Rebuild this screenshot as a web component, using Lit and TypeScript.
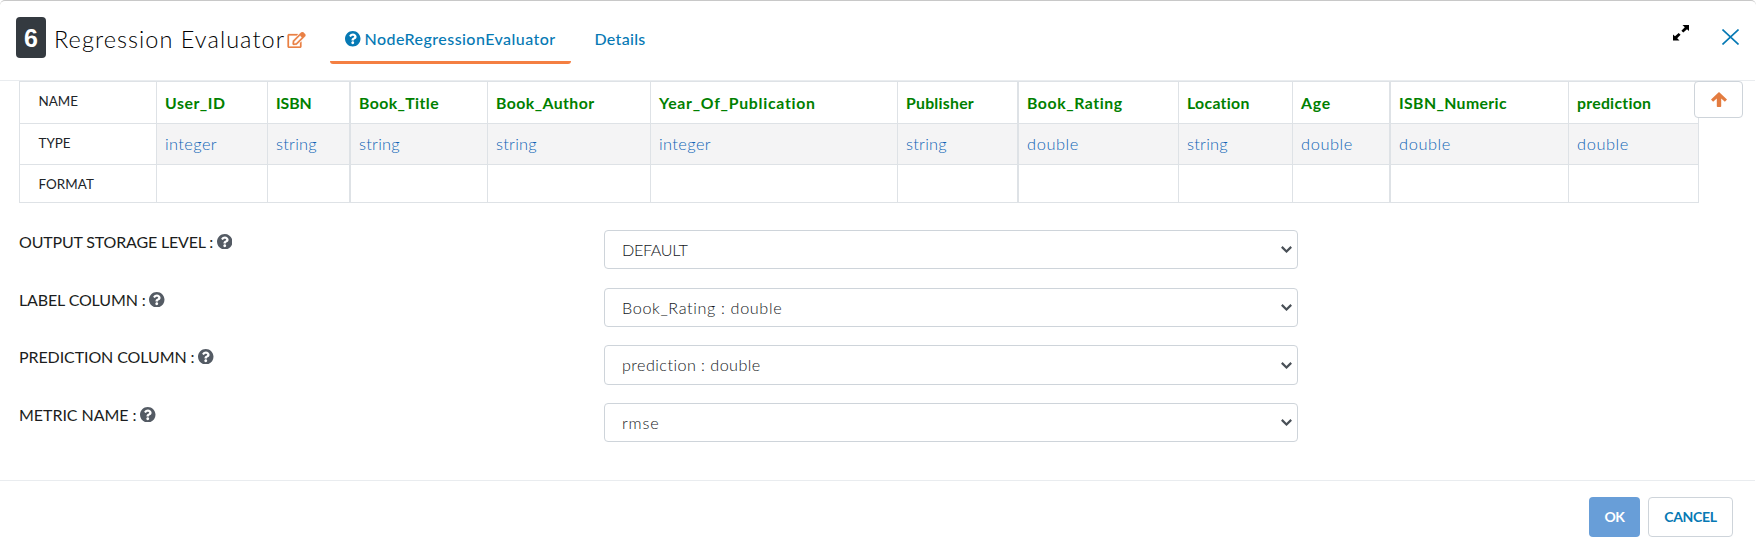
import { LitElement, html, css, svg } from "lit";
import { customElement, property } from "lit/decorators.js";
import { styleMap } from "lit/directives/style-map.js";

type Column = { name: string; nameWidth: number; type: string; typeWidth: number; closed?: boolean };
type Field = { label: string; labelWidth: number; value: string; valueWidth: number };

const COLUMNS: Column[] = [
  { name: "User_ID", nameWidth: 60.5, type: "integer", typeWidth: 52 },
  { name: "ISBN", nameWidth: 35.5, type: "string", typeWidth: 41, closed: true },
  { name: "Book_Title", nameWidth: 80, type: "string", typeWidth: 41 },
  { name: "Book_Author", nameWidth: 98.5, type: "string", typeWidth: 41 },
  { name: "Year_Of_Publication", nameWidth: 157, type: "integer", typeWidth: 52 },
  { name: "Publisher", nameWidth: 68, type: "string", typeWidth: 41, closed: true },
  { name: "Book_Rating", nameWidth: 96, type: "double", typeWidth: 52 },
  { name: "Location", nameWidth: 63, type: "string", typeWidth: 41 },
  { name: "Age", nameWidth: 30, type: "double", typeWidth: 52, closed: true },
  { name: "ISBN_Numeric", nameWidth: 108, type: "double", typeWidth: 52 },
  { name: "prediction", nameWidth: 74.5, type: "double", typeWidth: 52 },
];

const FIELDS: Field[] = [
  { label: "OUTPUT STORAGE LEVEL :", labelWidth: 195, value: "DEFAULT", valueWidth: 65.5 },
  { label: "LABEL COLUMN :", labelWidth: 127, value: "Book_Rating : double", valueWidth: 160.5 },
  { label: "PREDICTION COLUMN :", labelWidth: 175.5, value: "prediction : double", valueWidth: 139 },
  { label: "METRIC NAME :", labelWidth: 117.5, value: "rmse", valueWidth: 37.5 },
];

/** A line of text whose tracking is chosen so that it spans a given width. */
@customElement("fit-text")
class FitText extends LitElement {
  static styles = css`
    :host { display: inline-block; white-space: pre; }
  `;
  @property() text = "";
  @property({ type: Number }) width = 0;

  private tracking() {
    const own = getComputedStyle(this);
    const ctx = document.createElement("canvas").getContext("2d")!;
    ctx.font = `${own.fontWeight} ${own.fontSize} ${own.fontFamily}`;
    return (this.width - ctx.measureText(this.text).width) / this.text.length;
  }

  render() {
    return html`<span style=${styleMap({ letterSpacing: `${this.tracking().toFixed(3)}px` })}>${this.text}</span>`;
  }
}

const fit = (text: string, width: number) => html`<fit-text .text=${text} .width=${width}></fit-text>`;

const helpIcon = html`<svg class="help" viewBox="8 8 496 496">
  ${svg`<path d="M504 256c0 136.997-111.043 248-248 248S8 392.997 8 256C8 119.083 119.043 8 256 8s248 111.083 248 248zM262.655 90c-54.497 0-89.255 22.957-116.549 63.758-3.536 5.286-2.353 12.415 2.715 16.258l34.699 26.31c5.205 3.947 12.621 3.008 16.665-2.122 17.864-22.658 30.113-35.797 57.303-35.797 20.429 0 45.698 13.148 45.698 32.958 0 14.976-12.363 22.667-32.534 33.976C247.128 238.528 216 254.941 216 296v4c0 6.627 5.373 12 12 12h56c6.627 0 12-5.373 12-12v-1.333c0-28.462 83.186-29.647 83.186-106.667 0-58.002-60.165-102-116.531-102zM256 338c-25.365 0-46 20.635-46 46 0 25.364 20.635 46 46 46s46-20.636 46-46c0-25.365-20.635-46-46-46z"/>`}
</svg>`;

@customElement("app-root")
class AppRoot extends LitElement {
  static styles = css`
    :host {
      display: block;
      height: 554px;
      background: #fff;
      font-family: Lato, "Open Sans", sans-serif;
      color: #212529;
    }
    * { box-sizing: border-box; }
    svg { display: block; flex: none; fill: currentColor; }
    button { font: inherit; color: inherit; padding: 0; background: #fff; border: 0; }

    .dialog {
      display: flex;
      flex-direction: column;
      width: 1756px;
      height: 554px;
      border-top: 1px solid #c8c8c8;
      border-radius: 5px 5px 0 0;
    }
    .header {
      display: flex;
      align-items: flex-start;
      height: 80px;
      margin-right: 1px;
      padding: 16px 17px 0 16px;
      border-bottom: 1px solid #e9ecef;
    }
    .badge {
      width: 30px;
      height: 41px;
      border-radius: 4px;
      background: #343a40;
      color: #fff;
      font: 700 25px/43px "Liberation Sans", Arial, sans-serif;
      text-align: center;
    }
    .title {
      margin: 4px 0 0 8px;
      color: #000;
      font-size: 23.5px;
      font-weight: 300;
      line-height: 36px;
      width: 233px;
      white-space: nowrap;
    }
    .edit { width: 19px; height: 16px; margin-top: 15px; color: #e98045; stroke: currentColor; stroke-width: 8; }
    .tabs { display: flex; margin-left: 24px; color: #0679b4; font-size: 16px; font-weight: 500; }
    .tab { display: flex; height: 47px; padding: 12px 15px 0; line-height: 19px; }
    .tab.active { width: 241px; border-bottom: 3px solid #f47f42; border-radius: 3px; }
    .tab .help { width: 15.5px; height: 15.5px; margin: 2px 4px 0 0; }
    .tab.details { padding-left: 23.5px; }
    .help { width: 15.5px; height: 15.5px; }
    .tools { display: flex; margin-left: auto; }
    .expand { width: 16px; height: 16px; margin-top: 8px; color: #000; }
    .close { width: 17px; height: 16px; margin: 12px -0.5px 0 32.5px; stroke: #0679b4; fill: none; stroke-width: 1.6; }

    .body { display: flex; flex-direction: column; height: 399px; }
    .schema { display: flex; align-items: flex-start; }
    .table {
      display: grid;
      grid-template-columns: 137px 111px 83px 137px 163px 247px 121px 160px 114px 98px 178px 130px;
      grid-template-rows: 42px 41px 38px;
      width: 1680px;
      margin-left: 19px;
      border: solid #dee2e6;
      border-width: 1px 0 0 1px;
      flex: none;
    }
    .cell {
      border: solid #dee2e6;
      border-width: 0 1px 1px 0;
      padding-left: 8px;
      white-space: nowrap;
    }
    .cell.closed { border-right-width: 2px; }
    .cell.head { padding-left: 18.5px; font-size: 13.4px; line-height: 38px; }
    .cell.name { color: #008000; font-size: 15.8px; font-weight: 700; line-height: 42px; }
    .cell.type {
      color: #0f65b5;
      background: #f4f4f5;
      font-size: 16.4px;
      font-weight: 300;
      line-height: 39px;
    }
    .up {
      display: flex;
      align-items: center;
      justify-content: center;
      width: 49px;
      height: 37px;
      margin-left: -5px;
      border: 1px solid #ced4da;
      border-radius: 4px;
      color: #e37c40;
      z-index: 1;
    }
    .up svg { width: 16px; height: 15px; }

    .form { display: grid; grid-template-rows: 58px 57px 58px 58px; margin-top: 27px; }
    .field { display: grid; grid-template-columns: 585px 694px; margin-left: 19px; align-items: start; }
    .label { display: flex; height: 23px; align-items: center; font-size: 16px; gap: 3.5px; color: #1b1d20; }
    .label .help { color: #545b64; }
    .select {
      display: flex;
      align-items: center;
      justify-content: space-between;
      height: 39px;
      padding: 0 5.5px 0 17px;
      border: 1px solid #ced4da;
      border-radius: 4px;
      color: #495057;
      font-size: 16.2px;
      line-height: 20px;
    }
    .field:nth-child(3) .select { height: 40px; }
    .value { color: #14181c; font-weight: 300; }
    .select svg { width: 11px; height: 7px; fill: none; stroke: #495057; stroke-width: 2.2; }

    .footer {
      display: flex;
      justify-content: flex-end;
      gap: 8px;
      height: 74px;
      margin-right: 1px;
      padding: 16px 22px 0 0;
      border-top: 1px solid #e9ecef;
      font-size: 14px;
      font-weight: 700;
    }
    .ok { width: 51px; height: 40px; padding-bottom: 2px; border-radius: 4px; background: #689ed8; color: #fff; }
    .cancel {
      width: 85px;
      height: 40px;
      padding-bottom: 2px;
      border: 1px solid #ced4da;
      border-radius: 4px;
      color: #0679b4;
    }
  `;

  private renderTable() {
    const edge = (c: Column) => (c.closed ? "closed" : "");
    return html`<div class="table">
      <div class="cell head">${fit("NAME", 39.5)}</div>
      ${COLUMNS.map((c) => html`<div class="cell name ${edge(c)}">${fit(c.name, c.nameWidth)}</div>`)}
      <div class="cell head">${fit("TYPE", 32)}</div>
      ${COLUMNS.map((c) => html`<div class="cell type ${edge(c)}">${fit(c.type, c.typeWidth)}</div>`)}
      <div class="cell head">${fit("FORMAT", 55.5)}</div>
      ${COLUMNS.map((c) => html`<div class="cell ${edge(c)}"></div>`)}
    </div>`;
  }

  private renderField(f: Field) {
    return html`<div class="field">
      <div class="label">${fit(f.label, f.labelWidth)}${helpIcon}</div>
      <div class="select">
        <span class="value">${fit(f.value, f.valueWidth)}</span>
        <svg viewBox="0 0 11 7"><path d="M0.8 0.9L5.5 5.5L10.2 0.9" /></svg>
      </div>
    </div>`;
  }

  render() {
    return html`<div class="dialog">
      <div class="header">
        <div class="badge">6</div>
        <div class="title">${fit("Regression Evaluator", 231)}</div>
        <svg class="edit" viewBox="0 0 576 512">
          <path d="M402.3 344.9l32-32c5-5 13.7-1.5 13.7 5.7V464c0 26.500-21.500 48-48 48H48c-26.500 0-48-21.500-48-48V112c0-26.500 21.500-48 48-48h273.500c7.100 0 10.700 8.600 5.700 13.700l-32 32c-1.500 1.500-3.500 2.300-5.700 2.300H48v352h352V350.500c0-2.100.8-4.100 2.300-5.600zm156.600-201.800L296.300 405.700l-90.400 10c-26.200 2.900-48.500-19.200-45.600-45.600l10-90.400L432.900 17.100c22.900-22.900 59.900-22.900 82.700 0l43.200 43.200c22.900 22.900 22.900 60 .1 82.800zM460.100 174L402 115.900 216.200 301.800l-7.300 65.300 65.300-7.300L460.100 174z" />
        </svg>
        <div class="tabs">
          <div class="tab active">${helpIcon}${fit("NodeRegressionEvaluator", 191)}</div>
          <div class="tab details">${fit("Details", 51)}</div>
        </div>
        <div class="tools">
          <svg class="expand" viewBox="0 0 16 16">
            <path d="M9.500 0H16V6L14 4.200L10.300 7.600L8.400 5.700L11.800 2.200ZM6.500 15.500H0V9.500L2 11.300L5.700 7.900L7.600 9.800L4.200 13.300Z" />
          </svg>
          <svg class="close" viewBox="0 0 17 16"><path d="M0.500 0.500L16.500 15.500M16.500 0.500L0.500 15.500" /></svg>
        </div>
      </div>
      <div class="body">
        <div class="schema">
          ${this.renderTable()}
          <button class="up">
            <svg viewBox="0 0 16 15"><path d="M8 0L16 7.600L13.900 9.800L10.200 6.500V14.200Q10.200 15 9.400 15H6.600Q5.800 15 5.800 14.200V6.500L2.100 9.800L0 7.600Z" /></svg>
          </button>
        </div>
        <div class="form">${FIELDS.map((f) => this.renderField(f))}</div>
      </div>
      <div class="footer">
        <button class="ok">${fit("OK", 20)}</button>
        <button class="cancel">${fit("CANCEL", 52.5)}</button>
      </div>
    </div>`;
  }
}
